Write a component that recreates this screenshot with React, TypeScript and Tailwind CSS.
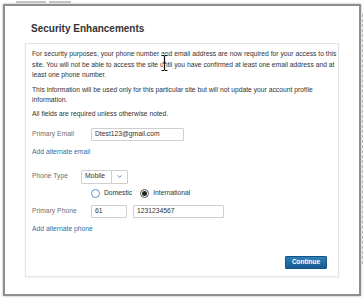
import { ChevronDown } from 'lucide-react';

export default function App() {
  return (
    <div className="relative w-[364px] h-[299px] bg-white overflow-hidden font-['Liberation_Sans',Arial,sans-serif] text-[#333]">
      {/* page content peeking out behind the dialog */}
      <div className="h-[4px] pl-[16px] flex items-start gap-[3px]">
        <div className="mt-[1px] w-[30px] h-[2px] bg-[#c4c4c4]" />
        <div className="mt-[1px] w-[22px] h-[2px] bg-[#c4c4c4]" />
      </div>

      <div className="flex">
        {/* Dialog */}
        <div className="ml-[3px] w-[358px] h-[292px] border-2 border-[#8e8e8e] bg-white shadow-[0_0_2px_rgba(0,0,0,0.35)] flex flex-col">
          <h1 className="mt-[17px] ml-[26px] text-[10px] leading-[12px] font-bold text-[#333]">Security Enhancements</h1>

          <div className="mt-[8px] ml-[20px] w-[314px] h-[234px] border border-[#e4e4e4] shadow-[0_1px_2px_rgba(0,0,0,0.06)] flex flex-col pt-[5px] px-[6px] text-[6.75px] leading-[10.5px]">
            <p className="whitespace-nowrap">
              For security purposes, your phone number and email address are now required for your access to this
              <br />
              site. You will not be able to access the site until you have confirmed at least one email address and at
              <br />
              least one phone number.
            </p>
            <p className="mt-[4px] whitespace-nowrap">
              This information will be used only for this particular site but will not update your account profile
              <br />
              information.
            </p>
            <p className="mt-[3.5px]">All fields are required unless otherwise noted.</p>

            {/* Primary email */}
            <div className="mt-[8px] flex items-center h-[13px]">
              <span className="w-[59px] text-[#6f6f6f]">Primary Email</span>
              <div className="w-[93px] h-[13px] border border-[#cfcfcf] rounded-[1px] flex items-center px-[3px]">Dtest123@gmail.com</div>
            </div>

            <a className="mt-[6.75px] text-[#2f6fa6] w-fit">Add alternate email</a>

            {/* Phone type */}
            <div className="mt-[11.75px] flex items-center h-[14px]">
              <span className="w-[49px] text-[#6f6f6f]">Phone Type</span>
              <div className="flex h-[14px] border border-[#cfcfcf] rounded-[1px]">
                <div className="w-[29px] flex items-center pl-[3px]">Mobile</div>
                <div className="w-[16px] border-l border-[#cfcfcf] flex items-center justify-center">
                  <ChevronDown size={7} strokeWidth={3} className="text-[#4a7fb0]" />
                </div>
              </div>
            </div>

            {/* Radios */}
            <div className="mt-[5.5px] ml-[59px] flex items-center h-[9px] gap-[4px]">
              <span className="w-[9px] h-[9px] rounded-full border border-[#5f8fbf] bg-white" />
              <span>Domestic</span>
              <span className="ml-[4px] w-[9px] h-[9px] rounded-full border border-[#555] bg-white flex items-center justify-center">
                <span className="w-[5px] h-[5px] rounded-full bg-[#222]" />
              </span>
              <span>International</span>
            </div>

            {/* Primary phone */}
            <div className="mt-[6.5px] flex items-center h-[13px]">
              <span className="w-[59px] text-[#6f6f6f]">Primary Phone</span>
              <div className="w-[36px] h-[13px] border border-[#cfcfcf] rounded-[1px] flex items-center px-[3px]">61</div>
              <div className="ml-[6px] w-[91px] h-[13px] border border-[#cfcfcf] rounded-[1px] flex items-center px-[3px]">1231234567</div>
            </div>

            <a className="mt-[6.75px] text-[#2f6fa6] w-fit">Add alternate phone</a>

            <div className="mt-auto mb-[7px] flex justify-end pr-[5px]">
              <button className="w-[42px] h-[13px] rounded-[1px] border border-[#145283] bg-gradient-to-b from-[#2d7fba] to-[#175c92] text-white text-[6.5px] font-semibold leading-none">
                Continue
              </button>
            </div>
          </div>
        </div>

        {/* edge of the page beside the dialog */}
        <div className="ml-[1px] mt-[10px] h-[250px] border-l border-dashed border-[#b5b5b5]" />
      </div>

      {/* text cursor over the first paragraph */}
      <svg className="absolute left-[160px] top-[54px]" width="9" height="18" viewBox="0 0 9 18">
        <path d="M1.5 1.5h2.5M5 1.5h2.5M4.5 1.5v15M1.5 16.5h2.5M5 16.5h2.5M2.5 9h4" stroke="#fff" strokeWidth="3" fill="none" />
        <path d="M1.5 1.5h2.5M5 1.5h2.5M4.5 1.5v15M1.5 16.5h2.5M5 16.5h2.5M2.5 9h4" stroke="#111" strokeWidth="1.2" fill="none" />
      </svg>
    </div>
  );
}
